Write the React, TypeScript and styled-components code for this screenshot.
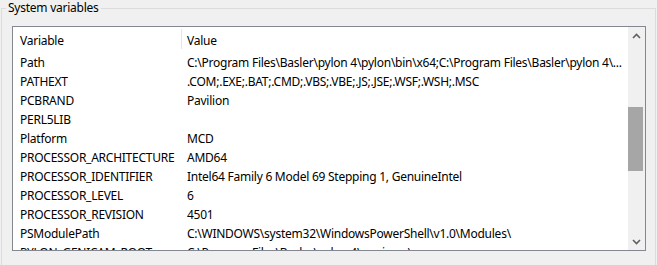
import React from 'react';
import styled, { createGlobalStyle } from 'styled-components';

const GlobalStyle = createGlobalStyle`
  html, body {
    margin: 0;
    padding: 0;
    background: #f0f0f0;
  }
  body {
    font-family: "Noto Sans", "Open Sans", sans-serif;
    font-size: 12px;
    letter-spacing: -0.25px;
    color: #000;
  }
`;

const Page = styled.div`
  width: 657px;
  height: 265px;
  overflow: hidden;
  padding-left: 1px;
  box-sizing: border-box;
`;

const GroupBox = styled.fieldset`
  margin: 0;
  width: 655px;
  height: 290px;
  box-sizing: border-box;
  border: 1px solid #dcdcdc;
  padding: 10px 9px 0 10px;
  min-width: 0;
`;

const GroupTitle = styled.legend`
  padding: 0 2px;
  margin-left: -6px;
  line-height: 16px;
  font-size: 12px;
`;

const ListBox = styled.div`
  width: 634px;
  height: 225px;
  box-sizing: border-box;
  border: 1px solid #828790;
  background: #fff;
  display: flex;
  overflow: hidden;
`;

const Table = styled.div`
  flex: 1;
  min-width: 0;
  display: flex;
  flex-direction: column;
  overflow: hidden;
`;

const Header = styled.div`
  height: 26px;
  flex-shrink: 0;
  display: grid;
  grid-template-columns: 168px 1px 1fr;
  align-items: center;
`;

const HeaderCell = styled.div<{ $first?: boolean }>`
  padding-left: ${p => (p.$first ? '7px' : '5px')};
  white-space: nowrap;
`;

const HeaderDivider = styled.div`
  align-self: stretch;
  margin: 2px 0 4px;
  background: #e5e5e5;
`;

const Row = styled.div`
  height: 19px;
  flex-shrink: 0;
  display: grid;
  grid-template-columns: 168px 1fr;
  align-items: center;
`;

const Cell = styled.div<{ $value?: boolean }>`
  padding-left: ${p => (p.$value ? '6px' : '7px')};
  white-space: nowrap;
  overflow: hidden;
  line-height: 19px;
`;

const ScrollBar = styled.div`
  width: 17px;
  flex-shrink: 0;
  background: #f0f0f0;
  display: flex;
  flex-direction: column;
`;

const ArrowButton = styled.div`
  height: 17px;
  display: flex;
  align-items: center;
  justify-content: center;
  flex-shrink: 0;
`;

const Track = styled.div`
  flex: 1;
  display: flex;
  flex-direction: column;
`;

const Thumb = styled.div`
  margin-top: 63px;
  height: 64px;
  width: 15px;
  background: #a6a6a6;
`;

const Chevron = ({ up }: { up?: boolean }) => (
  <svg width="9" height="6" viewBox="0 0 9 6">
    <path
      d={up ? 'M1 5 L4.5 1.5 L8 5' : 'M1 1 L4.5 4.5 L8 1'}
      fill="none"
      stroke="#606060"
      strokeWidth="1.6"
    />
  </svg>
);

const rows: [string, string][] = [
  ['Path', 'C:\\Program Files\\Basler\\pylon 4\\pylon\\bin\\x64;C:\\Program Files\\Basler\\pylon 4\\...'],
  ['PATHEXT', '.COM;.EXE;.BAT;.CMD;.VBS;.VBE;.JS;.JSE;.WSF;.WSH;.MSC'],
  ['PCBRAND', 'Pavilion'],
  ['PERL5LIB', ''],
  ['Platform', 'MCD'],
  ['PROCESSOR_ARCHITECTURE', 'AMD64'],
  ['PROCESSOR_IDENTIFIER', 'Intel64 Family 6 Model 69 Stepping 1, GenuineIntel'],
  ['PROCESSOR_LEVEL', '6'],
  ['PROCESSOR_REVISION', '4501'],
  ['PSModulePath', 'C:\\WINDOWS\\system32\\WindowsPowerShell\\v1.0\\Modules\\'],
  ['PYLON_GENICAM_ROOT', 'C:\\Program Files\\Basler\\pylon 4\\genicam\\'],
];

function App() {
  return (
    <>
      <GlobalStyle />
      <Page>
        <GroupBox>
          <GroupTitle>System variables</GroupTitle>
          <ListBox>
            <Table>
              <Header>
                <HeaderCell $first>Variable</HeaderCell>
                <HeaderDivider />
                <HeaderCell>Value</HeaderCell>
              </Header>
              {rows.map(([name, value]) => (
                <Row key={name}>
                  <Cell>{name}</Cell>
                  <Cell $value>{value}</Cell>
                </Row>
              ))}
            </Table>
            <ScrollBar>
              <ArrowButton>
                <Chevron up />
              </ArrowButton>
              <Track>
                <Thumb />
              </Track>
              <ArrowButton>
                <Chevron />
              </ArrowButton>
            </ScrollBar>
          </ListBox>
        </GroupBox>
      </Page>
    </>
  );
}

export default App;
